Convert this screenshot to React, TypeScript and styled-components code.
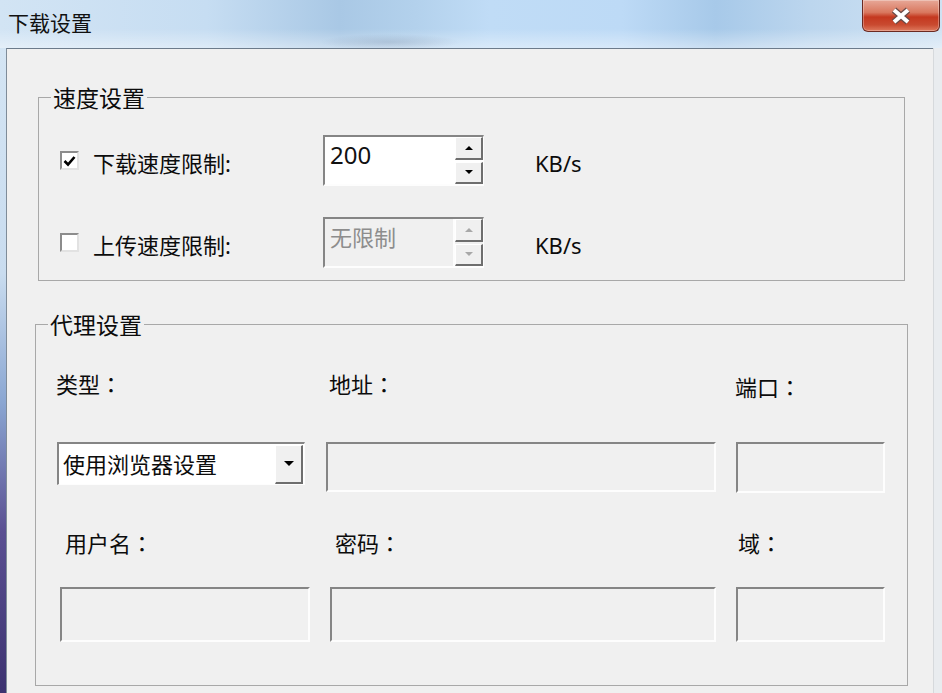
import React from "react";
import styled, { createGlobalStyle } from "styled-components";

const GlobalStyle = createGlobalStyle`
  html, body { margin: 0; padding: 0; background: #f0f0f0; }
  body { font-family: "Noto Sans", "Noto Sans CJK SC", sans-serif; color: #0c0c0c; }
  * { box-sizing: border-box; }
`;

const Window = styled.div`
  width: 942px;
  height: 693px;
  display: flex;
  flex-direction: column;
  overflow: hidden;
`;

const TitleBar = styled.div`
  height: 48px;
  flex-shrink: 0;
  display: flex;
  justify-content: space-between;
  align-items: flex-start;
  background:
    radial-gradient(ellipse 70px 8px at 390px 42px, rgba(80, 100, 130, 0.2), rgba(80, 100, 130, 0) 100%),
    linear-gradient(to bottom, rgba(255, 255, 255, 0) 60%, rgba(255, 255, 255, 0.4) 100%),
    linear-gradient(90deg, #d2e4f4 0%, #c6ddf2 22%, #a9c8e5 36%, #b3d1ec 44%, #c0dcf6 52%, #bddaf6 66%, #a7c9e9 76%, #bcd6ee 86%, #cfe2f3 100%);
`;

const Title = styled.div`
  font-family: "Noto Sans CJK SC", sans-serif;
  font-size: 21px;
  line-height: 30px;
  padding: 7px 0 0 8px;
  color: #111;
`;

const CloseButton = styled.button`
  width: 78px;
  height: 32px;
  margin-right: 2px;
  padding: 0;
  display: flex;
  align-items: center;
  justify-content: center;
  border: 1px solid #6b2a22;
  border-top: none;
  border-radius: 0 0 6px 6px;
  background: linear-gradient(to bottom, #e7a898 0%, #d9785f 40%, #c4381f 55%, #c94a30 80%, #de7a5e 100%);
  box-shadow: inset 0 0 0 1px rgba(255, 255, 255, 0.3);
`;

const Body = styled.div`
  flex: 1;
  min-height: 0;
  display: flex;
`;

const LeftFrame = styled.div`
  width: 6px;
  flex-shrink: 0;
  background: linear-gradient(to bottom, #d4e5f4 0%, #c9dcef 35%, #8aa6d2 55%, #5a4f92 75%, #3c3270 100%);
`;

const RightFrame = styled.div`
  width: 9px;
  flex-shrink: 0;
  background: #e9ecef;
  border-left: 1px solid #d6d9dc;
`;

const Client = styled.div`
  flex: 1;
  display: flex;
  flex-direction: column;
  align-items: flex-start;
  background: #f0f0f0;
  border-top: 1px solid #6c7b8b;
  border-left: 1px solid #7f8c99;
`;

const GroupBox = styled.fieldset<{ $left: number; $width: number; $top: number }>`
  margin: ${(p) => p.$top}px 0 0 ${(p) => p.$left}px;
  width: ${(p) => p.$width}px;
  padding: 0;
  border: 1px solid #a8a8a8;
  min-width: 0;
  flex-shrink: 0;
`;

const Legend = styled.legend`
  font-family: "Noto Sans CJK SC", sans-serif;
  font-size: 23px;
  line-height: 28px;
  padding: 0 2px;
  margin-left: 12px;
  color: #0c0c0c;
`;

const GroupContent = styled.div<{ $pad: string }>`
  padding: ${(p) => p.$pad};
`;

const SpeedRow = styled.div<{ $gap?: number }>`
  display: flex;
  align-items: center;
  height: 51px;
  margin-top: ${(p) => p.$gap ?? 0}px;
`;

const CheckBox = styled.span`
  width: 19px;
  height: 19px;
  margin-right: 14px;
  display: flex;
  align-items: center;
  justify-content: center;
  background: #fff;
  border-top: 2px solid #8c8c8c;
  border-left: 2px solid #8c8c8c;
  border-right: 2px solid #e2e2e2;
  border-bottom: 2px solid #e2e2e2;
`;

const RowLabel = styled.span`
  width: 230px;
  font-size: 22px;
  line-height: 30px;
  margin-top: 4px;
`;

const SpinBox = styled.div<{ $disabled?: boolean }>`
  width: 161px;
  height: 51px;
  display: flex;
  background: ${(p) => (p.$disabled ? "#f0f0f0" : "#ffffff")};
  border-top: 2px solid #858585;
  border-left: 2px solid #858585;
  border-right: 1px solid #fdfdfd;
  border-bottom: 2px solid #fdfdfd;
`;

const SpinValue = styled.span<{ $disabled?: boolean }>`
  flex: 1;
  padding: 3px 0 0 5px;
  font-size: ${(p) => (p.$disabled ? 22 : 24)}px;
  line-height: 30px;
  color: ${(p) => (p.$disabled ? "#8d8d8d" : "#111")};
  border-right: ${(p) => (p.$disabled ? "2px solid #fdfdfd" : "none")};
`;

const SpinButtons = styled.div`
  width: 28px;
  display: flex;
  flex-direction: column;
  gap: 2px;
`;

const SpinButton = styled.span`
  flex: 1;
  display: flex;
  align-items: center;
  justify-content: center;
  background: #f0f0f0;
  border-top: 1px solid #ffffff;
  border-left: 1px solid #ffffff;
  border-right: 2px solid #6e6e6e;
  border-bottom: 2px solid #6e6e6e;
`;

const Unit = styled.span`
  margin-left: 51px;
  font-size: 22px;
  line-height: 30px;
  margin-top: 4px;
`;

const Columns = styled.div<{ $cols: string; $gap: number; $indent: number; $top: number }>`
  display: grid;
  grid-template-columns: ${(p) => p.$cols};
  column-gap: ${(p) => p.$gap}px;
  align-items: start;
  margin-left: ${(p) => p.$indent}px;
  margin-top: ${(p) => p.$top}px;
`;

const FieldLabel = styled.span<{ $drop?: number }>`
  display: block;
  height: 30px;
  padding-top: ${(p) => p.$drop ?? 0}px;
  font-size: 22px;
  line-height: 30px;
  white-space: nowrap;
`;

const Colon = styled.span`
  font-family: "Noto Sans CJK TC", sans-serif;
  line-height: 1;
`;

const Field = styled.div<{ $h: number }>`
  height: ${(p) => p.$h}px;
  width: 100%;
  background: #f0f0f0;
  border-top: 2px solid #858585;
  border-left: 2px solid #858585;
  border-right: 2px solid #fdfdfd;
  border-bottom: 2px solid #fdfdfd;
`;

const Combo = styled.div`
  width: 248px;
  height: 43px;
  display: flex;
  align-items: center;
  background: #fff;
  border-top: 2px solid #858585;
  border-left: 2px solid #858585;
  border-right: 1px solid #fdfdfd;
  border-bottom: 1px solid #fdfdfd;
`;

const ComboText = styled.span`
  flex: 1;
  padding-left: 4px;
  font-size: 22px;
  line-height: 30px;
`;

const DropButton = styled.span`
  width: 28px;
  height: 39px;
  margin-right: 1px;
  display: flex;
  align-items: center;
  justify-content: center;
  background: #f0f0f0;
  border-top: 1px solid #ffffff;
  border-left: 1px solid #ffffff;
  border-right: 2px solid #6e6e6e;
  border-bottom: 2px solid #6e6e6e;
`;

const Arrow = ({ up, color, w = 8 }: { up?: boolean; color: string; w?: number }) => (
  <svg width={w} height={w / 2} viewBox="0 0 8 4">
    <polygon points={up ? "0,4 8,4 4,0" : "0,0 8,0 4,4"} fill={color} />
  </svg>
);

const Check = () => (
  <svg width="13" height="12" viewBox="0 0 13 12">
    <path d="M1.5 6 L5 9.5 L11.5 2" fill="none" stroke="#000" strokeWidth="2.6" />
  </svg>
);

const CloseGlyph = () => (
  <svg width="22" height="18" viewBox="0 0 22 18">
    <path d="M4 3 L18 15 M18 3 L4 15" stroke="#6a4a48" strokeWidth="6.5" strokeLinecap="butt" />
    <path d="M4 3 L18 15 M18 3 L4 15" stroke="#ffffff" strokeWidth="4" strokeLinecap="butt" />
  </svg>
);

const Lbl = ({ text, drop }: { text: string; drop?: number }) => (
  <FieldLabel $drop={drop}>
    {text}
    <Colon>：</Colon>
  </FieldLabel>
);

export default function App() {
  return (
    <>
      <GlobalStyle />
      <Window>
        <TitleBar>
          <Title>下载设置</Title>
          <CloseButton aria-label="关闭">
            <CloseGlyph />
          </CloseButton>
        </TitleBar>
        <Body>
          <LeftFrame />
          <Client>
            <GroupBox $left={31} $width={867} $top={34}>
              <Legend>速度设置</Legend>
              <GroupContent $pad="24px 0 12px 21px">
                <SpeedRow>
                  <CheckBox>
                    <Check />
                  </CheckBox>
                  <RowLabel>下载速度限制:</RowLabel>
                  <SpinBox>
                    <SpinValue>200</SpinValue>
                    <SpinButtons>
                      <SpinButton>
                        <Arrow up color="#000" />
                      </SpinButton>
                      <SpinButton>
                        <Arrow color="#000" />
                      </SpinButton>
                    </SpinButtons>
                  </SpinBox>
                  <Unit>KB/s</Unit>
                </SpeedRow>
                <SpeedRow $gap={31}>
                  <CheckBox />
                  <RowLabel>上传速度限制:</RowLabel>
                  <SpinBox $disabled>
                    <SpinValue $disabled>无限制</SpinValue>
                    <SpinButtons>
                      <SpinButton>
                        <Arrow up color="#a8a8a8" />
                      </SpinButton>
                      <SpinButton>
                        <Arrow color="#a8a8a8" />
                      </SpinButton>
                    </SpinButtons>
                  </SpinBox>
                  <Unit>KB/s</Unit>
                </SpeedRow>
              </GroupContent>
            </GroupBox>

            <GroupBox $left={28} $width={873} $top={29}>
              <Legend>代理设置</Legend>
              <GroupContent $pad="31px 0 43px 21px">
                <Columns $cols="273px 406px auto" $gap={0} $indent={-1} $top={0}>
                  <Lbl text="类型" />
                  <Lbl text="地址" />
                  <Lbl text="端口" drop={3} />
                </Columns>
                <Columns $cols="249px 390px 149px" $gap={20} $indent={0} $top={43}>
                  <Combo>
                    <ComboText>使用浏览器设置</ComboText>
                    <DropButton>
                      <Arrow color="#000" w={10} />
                    </DropButton>
                  </Combo>
                  <Field $h={50} />
                  <Field $h={51} />
                </Columns>
                <Columns $cols="270px 403px auto" $gap={0} $indent={8} $top={35}>
                  <Lbl text="用户名" />
                  <Lbl text="密码" />
                  <Lbl text="域" />
                </Columns>
                <Columns $cols="250px 386px 149px" $gap={20} $indent={3} $top={29}>
                  <Field $h={55} />
                  <Field $h={55} />
                  <Field $h={55} />
                </Columns>
              </GroupContent>
            </GroupBox>
          </Client>
          <RightFrame />
        </Body>
      </Window>
    </>
  );
}
